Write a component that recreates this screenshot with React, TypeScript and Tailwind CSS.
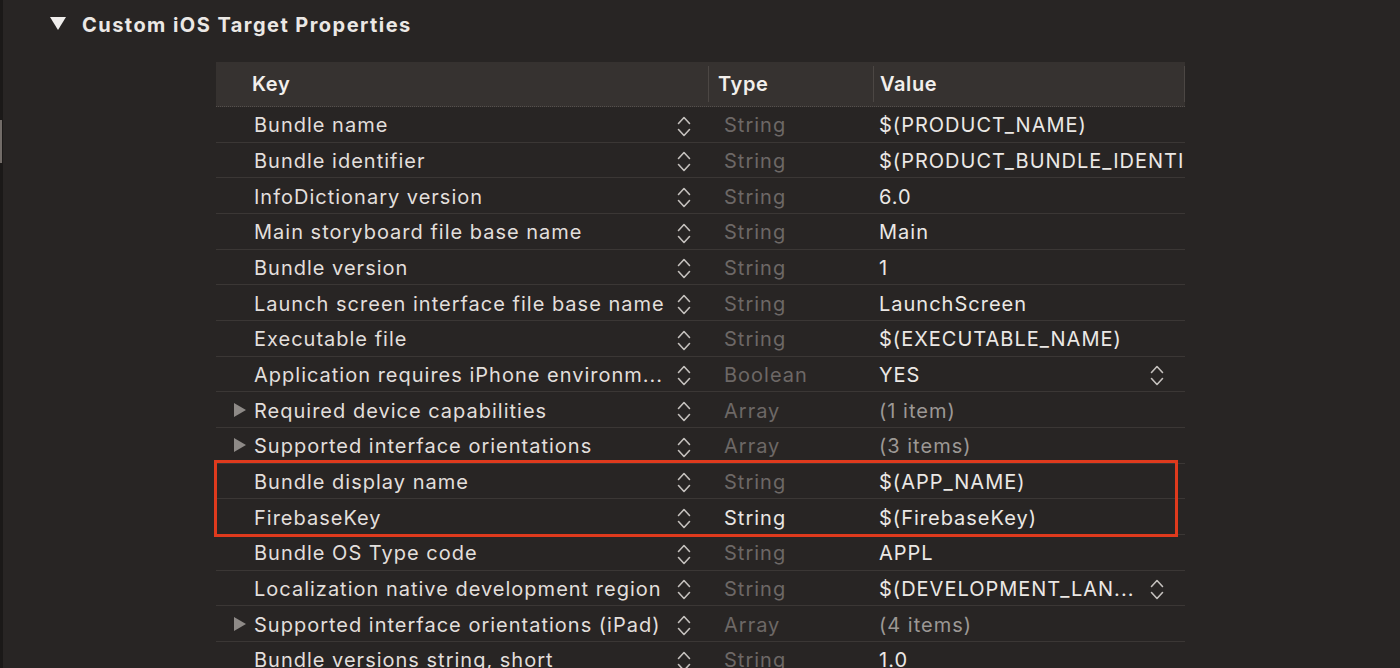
import { ReactNode } from 'react'

type Row = {
  key: string
  type: string
  value: string
  expandable?: boolean
  typeBright?: boolean
  valueDim?: boolean
  valueStepper?: boolean
}

const rows: Row[] = [
  { key: 'Bundle name', type: 'String', value: '$(PRODUCT_NAME)' },
  { key: 'Bundle identifier', type: 'String', value: '$(PRODUCT_BUNDLE_IDENTIFIER)' },
  { key: 'InfoDictionary version', type: 'String', value: '6.0' },
  { key: 'Main storyboard file base name', type: 'String', value: 'Main' },
  { key: 'Bundle version', type: 'String', value: '1' },
  { key: 'Launch screen interface file base name', type: 'String', value: 'LaunchScreen' },
  { key: 'Executable file', type: 'String', value: '$(EXECUTABLE_NAME)' },
  { key: 'Application requires iPhone environm...', type: 'Boolean', value: 'YES', valueStepper: true },
  { key: 'Required device capabilities', type: 'Array', value: '(1 item)', expandable: true, valueDim: true },
  { key: 'Supported interface orientations', type: 'Array', value: '(3 items)', expandable: true, valueDim: true },
  { key: 'Bundle display name', type: 'String', value: '$(APP_NAME)' },
  { key: 'FirebaseKey', type: 'String', value: '$(FirebaseKey)', typeBright: true },
  { key: 'Bundle OS Type code', type: 'String', value: 'APPL' },
  { key: 'Localization native development region', type: 'String', value: '$(DEVELOPMENT_LAN...', valueStepper: true },
  { key: 'Supported interface orientations (iPad)', type: 'Array', value: '(4 items)', expandable: true, valueDim: true },
  { key: 'Bundle versions string, short', type: 'String', value: '1.0' },
]

function Stepper() {
  return (
    <svg width="14" height="21" viewBox="0 0 14 21" className="translate-y-[2px]" fill="none" stroke="#c4c0bd" strokeWidth="1.6" strokeLinecap="round" strokeLinejoin="round">
      <path d="M1.5 7.5 L7 1.5 L12.5 7.5" />
      <path d="M1.5 13.5 L7 19.5 L12.5 13.5" />
    </svg>
  )
}

function Disclosure() {
  return (
    <svg width="14" height="16" viewBox="0 0 14 16">
      <polygon points="1,1 13,8 1,15" fill="#8e8a87" />
    </svg>
  )
}

function Cell({ className, children }: { className: string; children: ReactNode }) {
  return <div className={className}>{children}</div>
}

export default function App() {
  return (
    <div className="w-[1400px] h-[668px] overflow-hidden bg-[#282524] flex font-['Inter','Liberation_Sans',sans-serif] text-[20px] leading-[26px] tracking-[1px]">
      {/* left window edge */}
      <div className="w-[3px] shrink-0 bg-[#1b1918]">
        <div className="h-[120px]" />
        <div className="h-[43px] w-[2px] bg-[#726c68]" />
      </div>

      <div className="flex-1">
        {/* section title */}
        <div className="h-[48px] flex items-center pl-[47px] gap-[16px]">
          <svg width="16" height="14" viewBox="0 0 16 14" className="-translate-y-[1px]">
            <polygon points="0,1 16,1 8,14" fill="#f0eeec" />
          </svg>
          <span className="font-bold text-[#ebe8e5] tracking-[1.45px] translate-y-[1px]">Custom iOS Target Properties</span>
        </div>

        {/* table */}
        <div className="relative mt-[14px] ml-[213px] w-[969px]">
          <div className="h-[45px] bg-[#363230] flex items-center border-b border-dotted border-[#55504d] font-semibold text-[#f2efec] tracking-[0.6px]">
            <div className="w-[492px] pl-[36px]">Key</div>
            <div className="w-[165px] h-[36px] flex items-center pl-[9px] border-l border-[#4c4744]">Type</div>
            <div className="flex-1 h-[36px] flex items-center pl-[6px] border-l border-r border-[#4c4744]">Value</div>
          </div>

          {rows.map((r) => (
            <div key={r.key} className="h-[35.67px] flex items-center border-b border-[#3b3735]">
              <Cell className="w-[492px] flex items-center">
                <div className="w-[38px] pl-[17px] flex items-center">{r.expandable && <Disclosure />}</div>
                <div className="flex-1 text-[#e2dfdc] whitespace-nowrap translate-y-[1px]">{r.key}</div>
                <div className="w-[32px] flex justify-start pl-[1px]">
                  <Stepper />
                </div>
              </Cell>
              <Cell className={`w-[165px] pl-[16px] translate-y-[1px] ${r.typeBright ? 'text-[#e8e5e2]' : 'text-[#6d6866]'}`}>{r.type}</Cell>
              <Cell className="flex-1 flex items-center pl-[6px] overflow-hidden">
                <span className={`whitespace-nowrap translate-y-[1px] ${r.valueDim ? 'text-[#9c9895]' : 'text-[#ebe8e5]'}`}>{r.value}</span>
                {r.valueStepper && (
                  <span className="ml-auto mr-[21px]">
                    <Stepper />
                  </span>
                )}
              </Cell>
            </div>
          ))}

          {/* highlight */}
          <div className="absolute left-[-2px] top-[398px] w-[964px] h-[77px] border-[3px] border-[#df3a1d] pointer-events-none" />
        </div>
      </div>
    </div>
  )
}
